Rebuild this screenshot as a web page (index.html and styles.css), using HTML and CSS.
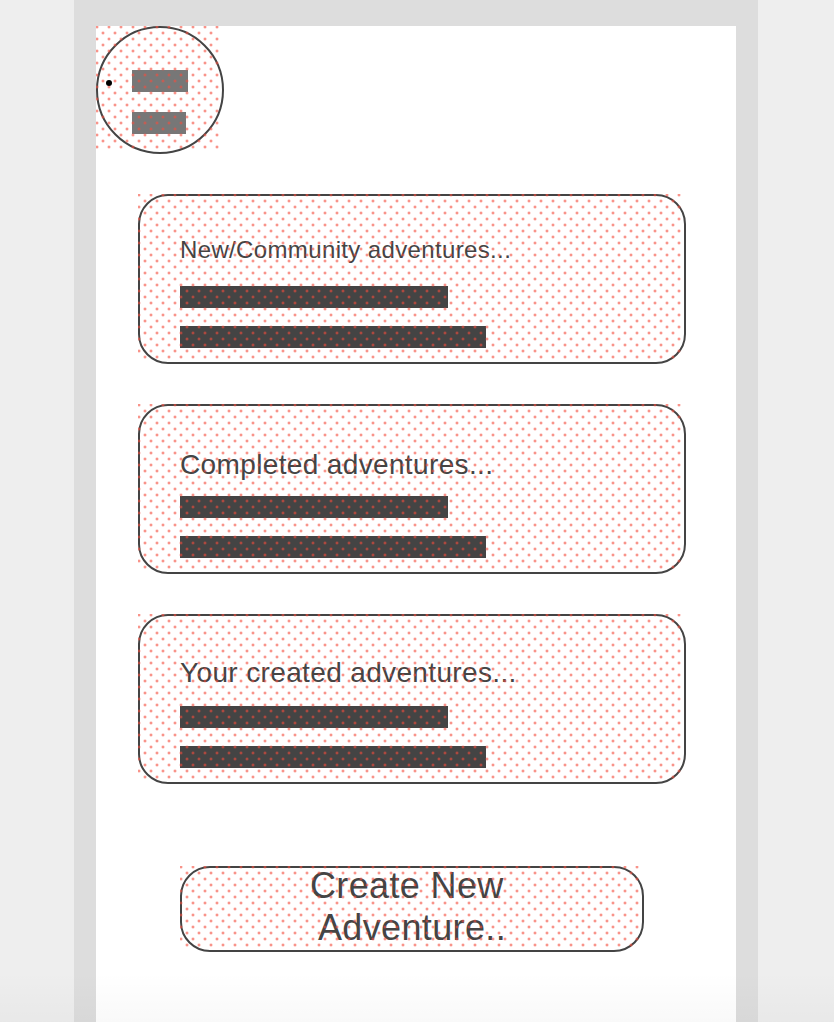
FILE: index.html
```html
<!DOCTYPE html>
<html lang="en">
<head>
<meta charset="utf-8">
<title>Adventures</title>
<link rel="stylesheet" href="styles.css">
</head>
<body>
<main class="frame">
  <div class="screen">
    <nav class="menu dotted" aria-label="Menu">
      <span class="bullet"></span>
      <div class="menu-lines">
        <div class="menu-line"></div>
        <div class="menu-line menu-line-short"></div>
      </div>
    </nav>
    <div class="cards">
      <section class="card dotted">
        <h2 class="title title-small">New/Community adventures...</h2>
        <div class="bar"></div>
        <div class="bar bar-long"></div>
      </section>
      <section class="card dotted">
        <h2 class="title">Completed adventures...</h2>
        <div class="bar"></div>
        <div class="bar bar-long"></div>
      </section>
      <section class="card dotted">
        <h2 class="title title-raised">Your created adventures...</h2>
        <div class="bar"></div>
        <div class="bar bar-long"></div>
      </section>
    </div>
    <button class="create dotted" type="button"><span class="create-label">Create New&nbsp;<br>Adventure..</span></button>
  </div>
</main>
<div class="fade"></div>
</body>
</html>
```

FILE: styles.css
```css
* { box-sizing: border-box; }

body {
  margin: 0;
  height: 1022px;
  overflow: hidden;
  background: #eee;
  color: #444;
  font-family: "Liberation Sans", Arial, sans-serif;
  letter-spacing: 0.36px;
}

.frame {
  width: 684px;
  height: 1022px;
  margin-left: 74px;
  padding: 26px 22px 0;
  background: #ddd;
}

.screen {
  height: 996px;
  background: #fff;
}

/* Dot pattern laid over each wireframe block, from its outer top left corner */
.dotted {
  position: relative;
  border: 2px solid #444;
}

.dotted::after {
  content: "";
  position: absolute;
  top: -2px;
  left: -2px;
  width: 100%;
  height: 100%;
  --dot: radial-gradient(circle at 6px 6px, rgba(244, 76, 60, 0.6) 1.2px, rgba(244, 76, 60, 0.19) 1.4px, rgba(244, 76, 60, 0.19) 1.75px, rgba(244, 76, 60, 0.04) 2px, transparent 2.3px);
  background-image: var(--dot), var(--dot);
  background-size: 12px 12px;
  background-position: -5px -5px, 1px 1px;
  pointer-events: none;
}

.menu {
  display: flex;
  width: 128px;
  height: 128px;
  padding: 42px 0 0 8px;
  border-radius: 50%;
}

.bullet {
  width: 6.6px;
  height: 6.6px;
  margin-top: 9.7px;
  margin-right: 19.7px;
  margin-left: -0.3px;
  border-radius: 50%;
  background: #000;
  position: relative;
  z-index: 1;
}

.menu-lines {
  display: flex;
  flex-direction: column;
  gap: 20px;
}

.menu-line {
  width: 56px;
  height: 22px;
  background: #777;
}

.menu-line-short { width: 54px; }

.cards {
  display: flex;
  flex-direction: column;
  gap: 40px;
  padding: 40px 50px 0 42px;
}

.card {
  display: flex;
  flex-direction: column;
  gap: 18px;
  height: 170px;
  padding: 40px 40px 0;
  border-radius: 30px;
}

.title {
  height: 32px;
  margin: 0;
  padding-top: 3px;
  font-size: 28px;
  font-weight: 400;
  line-height: 32px;
  white-space: nowrap;
}

.title-small {
  padding-top: 0;
  font-size: 24px;
  line-height: 28px;
}

.title-raised { padding-top: 1px; }

.bar {
  flex: none;
  width: 268px;
  height: 22px;
  background: #444;
}

.bar-long { width: 306px; }

.create {
  display: flex;
  justify-content: center;
  align-items: flex-start;
  width: 464px;
  height: 86px;
  margin: 82px 0 0 84px;
  padding: 0;
  border-radius: 30px;
  background: none;
  color: inherit;
  font: 36px/42px "Liberation Sans", Arial, sans-serif;
  letter-spacing: 0.36px;
  text-align: center;
}

.create-label { margin-top: -3px; }

/* Soft shade along the bottom of the window */
.fade {
  position: absolute;
  left: 0;
  right: 0;
  top: 972px;
  height: 50px;
  background: linear-gradient(transparent, rgba(0, 0, 0, 0.022));
}
```
